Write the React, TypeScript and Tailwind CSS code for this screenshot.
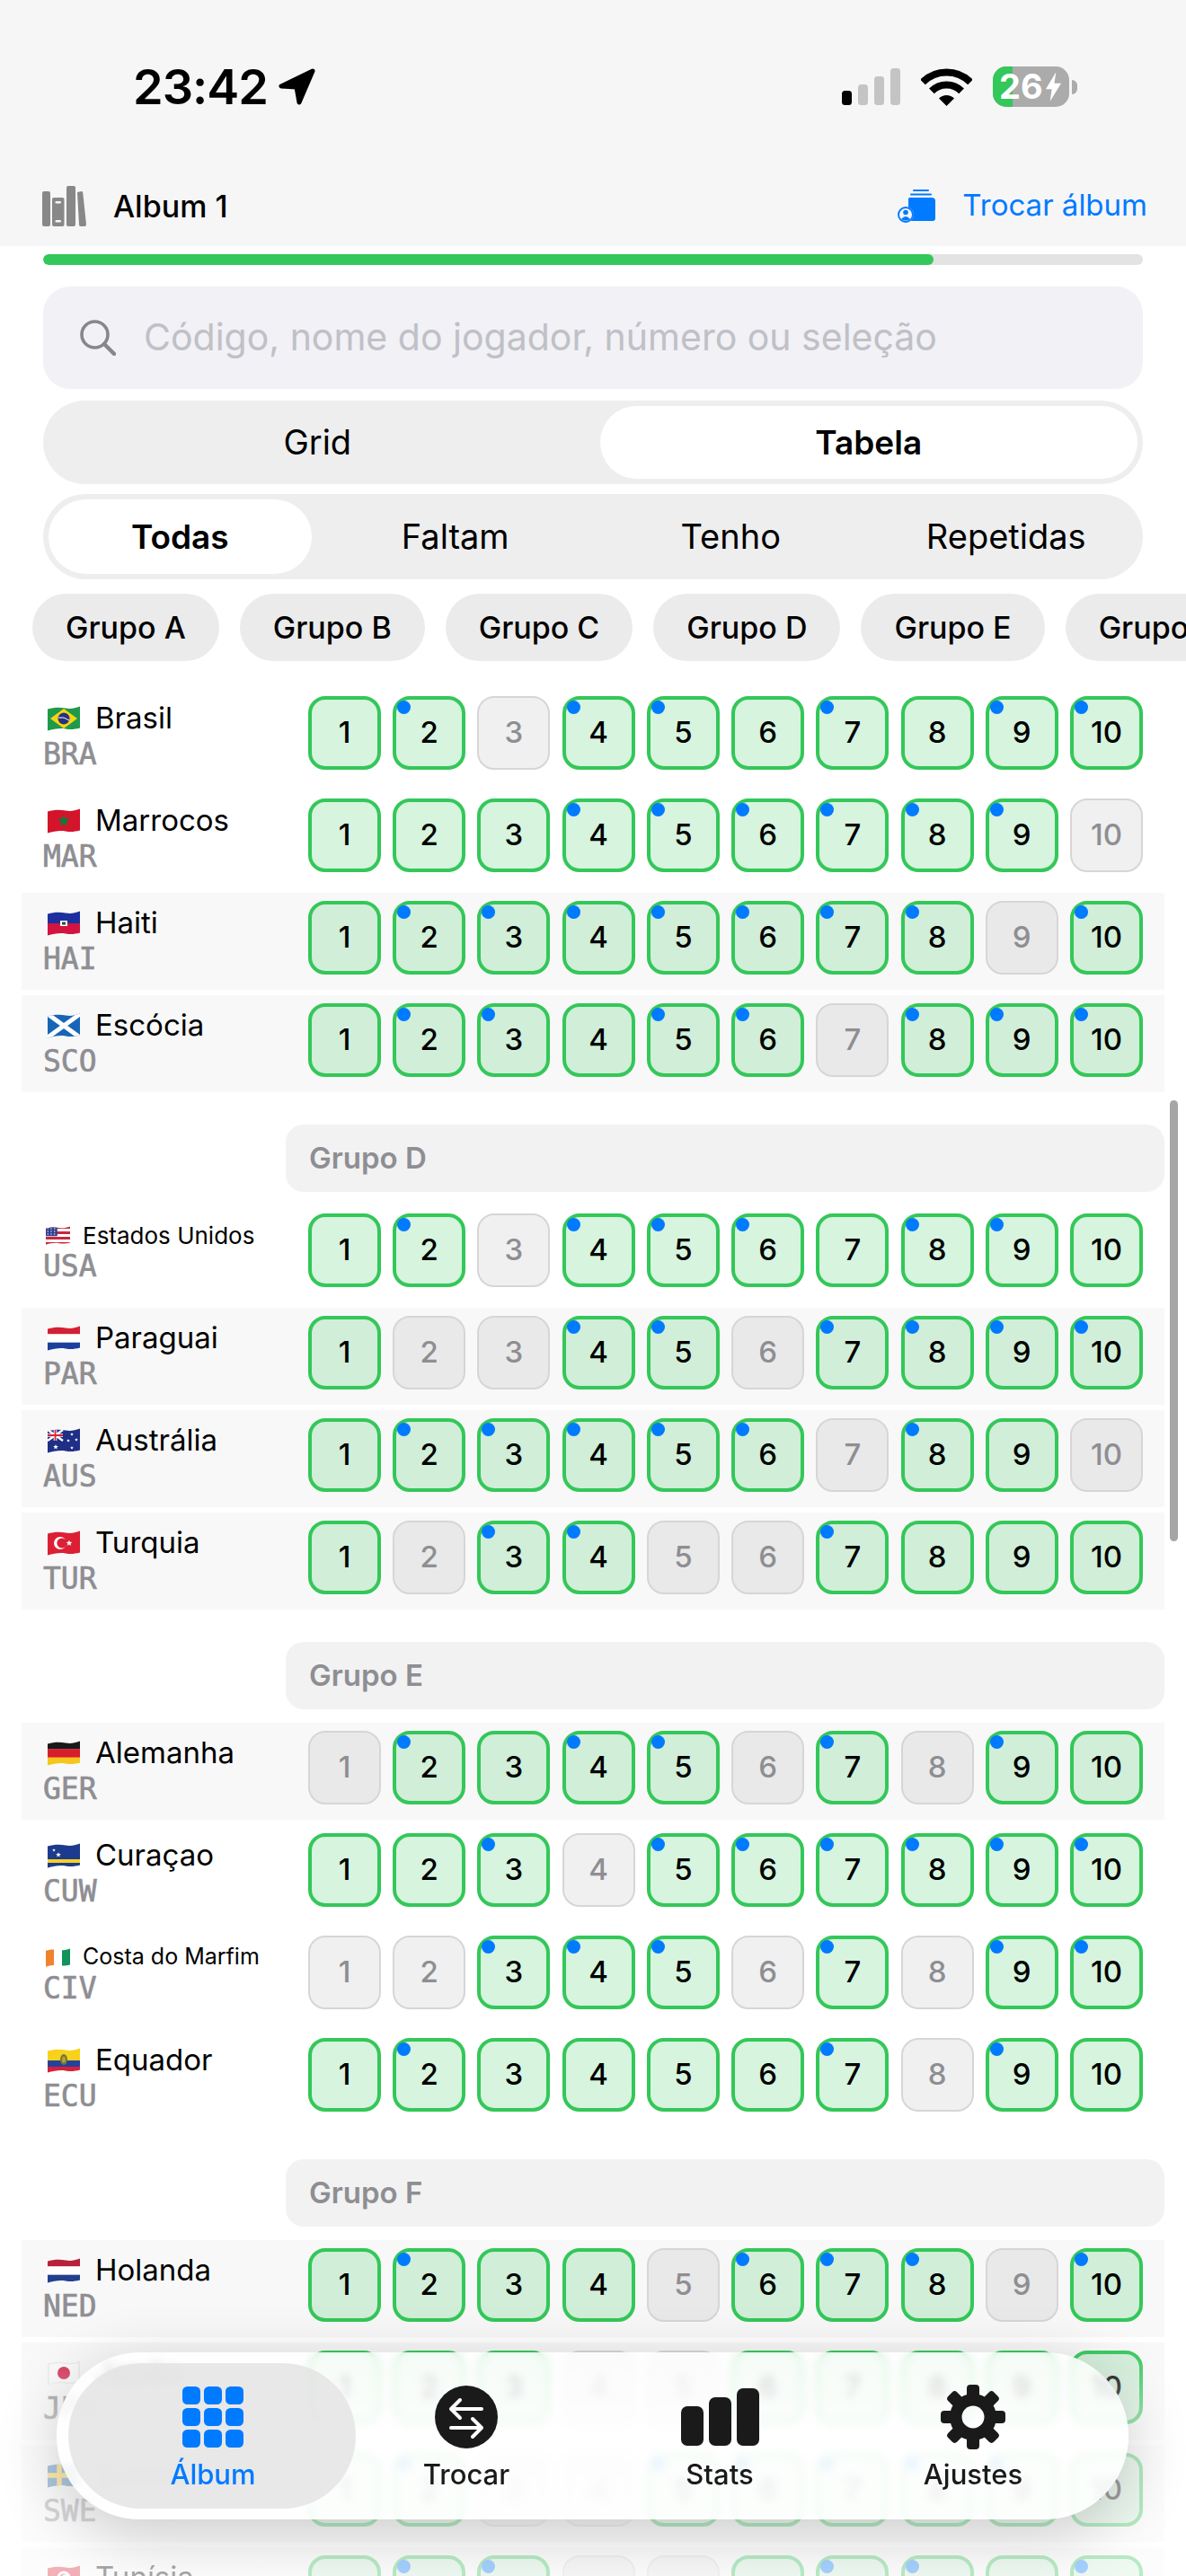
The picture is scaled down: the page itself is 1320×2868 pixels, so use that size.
import React, { useId } from 'react';

type Team = { name: string; code: string; flag: string; cells: string; shaded?: boolean; small?: string };

const groups: { title?: string; teams: Team[] }[] = [
  {
    teams: [
      { name: 'Brasil', code: 'BRA', flag: 'bra', cells: 'odmddododd' },
      { name: 'Marrocos', code: 'MAR', flag: 'mar', cells: 'oooddddddm' },
      { name: 'Haiti', code: 'HAI', flag: 'hai', cells: 'odddddddmd', shaded: true },
      { name: 'Escócia', code: 'SCO', flag: 'sco', cells: 'oddoddmddd', shaded: true },
    ],
  },
  {
    title: 'Grupo D',
    teams: [
      { name: 'Estados Unidos', code: 'USA', flag: 'usa', cells: 'odmdddoddo', small: 'text-[26px]' },
      { name: 'Paraguai', code: 'PAR', flag: 'par', cells: 'ommddmdddd', shaded: true },
      { name: 'Austrália', code: 'AUS', flag: 'aus', cells: 'odddddmdom', shaded: true },
      { name: 'Turquia', code: 'TUR', flag: 'tur', cells: 'omddmmdooo', shaded: true },
    ],
  },
  {
    title: 'Grupo E',
    teams: [
      { name: 'Alemanha', code: 'GER', flag: 'ger', cells: 'mdoddmdmdo', shaded: true },
      { name: 'Curaçao', code: 'CUW', flag: 'cuw', cells: 'oodmdddddd' },
      { name: 'Costa do Marfim', code: 'CIV', flag: 'civ', cells: 'mmdddmdmdd', small: 'text-[25px]' },
      { name: 'Equador', code: 'ECU', flag: 'ecu', cells: 'odoooodmdo' },
    ],
  },
  {
    title: 'Grupo F',
    teams: [
      { name: 'Holanda', code: 'NED', flag: 'ned', cells: 'odoomdddmd', shaded: true },
      { name: 'Japão', code: 'JPN', flag: 'jpn', cells: 'ooommooooo', shaded: true },
      { name: 'Suécia', code: 'SWE', flag: 'swe', cells: 'odmmdddddo', shaded: true },
      { name: 'Tunísia', code: 'TUN', flag: 'tun', cells: 'oddmmoddod', shaded: true },
    ],
  },
];

const Star = ({ x, y, r, fill }: { x: number; y: number; r: number; fill: string }) => {
  const pts = Array.from({ length: 10 }, (_, i) => {
    const a = (Math.PI / 5) * i - Math.PI / 2;
    const d = i % 2 ? r * 0.42 : r;
    return `${x + d * Math.cos(a)},${y + d * Math.sin(a)}`;
  }).join(' ');
  return <polygon points={pts} fill={fill} />;
};

const bands = (colors: string[]) =>
  colors.map((c, i) => <rect key={i} x="0" y={(i * 28) / colors.length} width="36" height={28 / colors.length + 0.2} fill={c} />);

const flagArt: Record<string, React.ReactNode> = {
  bra: (
    <>
      <rect width="36" height="28" fill="#1f9a49" />
      <polygon points="18,3 33,14 18,25 3,14" fill="#f7d417" />
      <circle cx="18" cy="14" r="6.5" fill="#26327f" />
      <path d="M12 13 Q18 11.5 24 16" stroke="#fff" strokeWidth="1" fill="none" />
    </>
  ),
  mar: (
    <>
      <rect width="36" height="28" fill="#d3142a" />
      <Star x={18} y={14} r={7} fill="#0f7a3a" />
    </>
  ),
  hai: (
    <>
      {bands(['#1c2f9f', '#d2143f'])}
      <rect x="14" y="11" width="8" height="6" fill="#fff" />
      <rect x="16" y="12.5" width="4" height="3" fill="#27503a" />
    </>
  ),
  sco: (
    <>
      <rect width="36" height="28" fill="#1666b5" />
      <path d="M0 1 L36 27 M36 1 L0 27" stroke="#fff" strokeWidth="5" />
    </>
  ),
  usa: (
    <>
      {bands(['#c8283c', '#fff', '#c8283c', '#fff', '#c8283c', '#fff', '#c8283c'])}
      <rect width="17" height="15" fill="#2f3f8f" />
      {[3, 8, 13].map((x) => [4, 8, 12].map((y) => <circle key={`${x}${y}`} cx={x} cy={y} r="0.9" fill="#fff" />))}
    </>
  ),
  par: <>{bands(['#d42035', '#fff', '#1d3f9c'])}</>,
  aus: (
    <>
      <rect width="36" height="28" fill="#1f2f86" />
      <path d="M0 2 L17 14 M17 2 L0 14" stroke="#fff" strokeWidth="2.4" />
      <path d="M8.5 2 V14 M0 8 H17" stroke="#fff" strokeWidth="3.6" />
      <path d="M8.5 2 V14 M0 8 H17" stroke="#d8213a" strokeWidth="1.8" />
      <Star x={9} y={21} r={3} fill="#fff" />
      <Star x={27} y={7} r={2} fill="#fff" />
      <Star x={32} y={13} r={2} fill="#fff" />
      <Star x={23} y={14} r={2} fill="#fff" />
      <Star x={27} y={22} r={2} fill="#fff" />
    </>
  ),
  tur: (
    <>
      <rect width="36" height="28" fill="#dc1f35" />
      <circle cx="14" cy="14" r="7" fill="#fff" />
      <circle cx="16" cy="14" r="5.6" fill="#dc1f35" />
      <Star x={24} y={14} r={3.6} fill="#fff" />
    </>
  ),
  ger: <>{bands(['#1a1a1a', '#d81e2a', '#f6c61c'])}</>,
  cuw: (
    <>
      <rect width="36" height="28" fill="#1c3a8e" />
      <rect y="18" width="36" height="4" fill="#f5d21f" />
      <Star x={7} y={8} r={2} fill="#fff" />
      <Star x={12} y={13} r={3} fill="#fff" />
    </>
  ),
  civ: (
    <>
      <rect width="12" height="28" fill="#f0832a" />
      <rect x="12" width="12" height="28" fill="#fff" />
      <rect x="24" width="12" height="28" fill="#12935a" />
    </>
  ),
  ecu: (
    <>
      <rect width="36" height="14" fill="#f8d21a" />
      <rect y="14" width="36" height="7" fill="#24429c" />
      <rect y="21" width="36" height="7" fill="#d8203a" />
      <ellipse cx="18" cy="13" rx="4" ry="6" fill="#6c7a3c" />
      <ellipse cx="18" cy="13" rx="2" ry="3.5" fill="#c89a2a" />
    </>
  ),
  ned: <>{bands(['#b8233a', '#fff', '#23408f'])}</>,
  jpn: (
    <>
      <rect width="36" height="28" fill="#ececec" />
      <path d="M2 5 C9 3 14 3 20 4 S30 4 34 2.5 V23 C30 24.5 26 25 20 24 S9 24 2 26 Z" fill="#fafafa" />
      <circle cx="18" cy="14" r="7" fill="#d3264f" />
    </>
  ),
  swe: (
    <>
      <rect width="36" height="28" fill="#2c6cb0" />
      <path d="M13 0 V28 M0 14 H36" stroke="#f7cf2a" strokeWidth="5.5" />
    </>
  ),
  tun: (
    <>
      <rect width="36" height="28" fill="#dc1f35" />
      <circle cx="18" cy="14" r="7.5" fill="#fff" />
      <circle cx="18" cy="14" r="4.6" fill="#dc1f35" />
      <circle cx="19.6" cy="14" r="3.8" fill="#fff" />
    </>
  ),
};

const Flag = ({ id, small }: { id: string; small?: boolean }) => {
  const clip = useId();
  return (
    <svg viewBox="0 0 36 28" className={small ? 'w-[27px] h-[21px] shrink-0' : 'w-[36px] h-[28px] shrink-0'}>
      <clipPath id={clip}>
        <path d="M0 3.5 C7 1.5 14 1.5 20 2.5 S30 2.5 36 0.5 V24.5 C30 26 26 26.5 20 25.5 S7 25.5 0 27.5 Z" />
      </clipPath>
      <g clipPath={`url(#${clip})`}>{flagArt[id]}</g>
    </svg>
  );
};

const Cell = ({ n, state }: { n: number; state: string }) => {
  if (state === 'm') {
    return (
      <div className="h-[82px] rounded-[19px] border-2 border-[#d6d6d6] bg-black/[0.06] flex items-center justify-center text-[33px] font-medium text-[#8e8e93]">
        {n}
      </div>
    );
  }
  return (
    <div className="relative h-[82px] rounded-[19px] border-4 border-[#34c759] bg-[#34c759]/20 flex items-center justify-center text-[33px] font-medium text-black">
      {state === 'd' && <span className="absolute left-[1px] top-[1px] w-[15px] h-[15px] rounded-full bg-[#007aff]" />}
      {n}
    </div>
  );
};

const Row = ({ team }: { team: Team }) => (
  <div className={`flex h-[108px] pt-[9px] pl-[24px] pr-[24px] ${team.shaded ? 'bg-[#f8f8f8]' : ''}`}>
    <div className="w-[295px] shrink-0 pt-[5px]">
      <div className={`flex items-center ${team.small ? 'h-[38px] gap-[14px] pl-[3px]' : 'h-[40px] gap-[17px] pl-[5px]'}`}>
        <Flag id={team.flag} small={!!team.small} />
        <span className={`text-black whitespace-nowrap ${team.small ? team.small : 'text-[33px]'}`}>{team.name}</span>
      </div>
      <div className={`font-['DejaVu_Sans_Mono',monospace] [-webkit-text-stroke:0.7px_#8e8e93] text-[#8e8e93] text-[33px] ${team.small ? 'h-[32px] leading-[32px]' : 'h-[40px] leading-[40px]'}`}>
        {team.code}
      </div>
    </div>
    <div className="flex-1 grid grid-cols-10 gap-x-[13.2px] self-start">
      {team.cells.split('').map((s, i) => (
        <Cell key={i} n={i + 1} state={s} />
      ))}
    </div>
  </div>
);

const Segmented = ({ items, active, className }: { items: string[]; active: string; className: string }) => (
  <div className={`mx-[48px] rounded-full bg-[#eeeeee] p-[6px] flex ${className}`}>
    {items.map((t) => (
      <div
        key={t}
        className={`flex-1 rounded-full flex items-center justify-center ${t === active ? 'bg-white font-semibold text-black text-[37px]' : 'font-normal text-black text-[38px]'}`}
      >
        {t}
      </div>
    ))}
  </div>
);

const StatusBar = () => (
  <div className="h-[45px] pl-[148px] pr-[121px] flex items-center justify-between">
    <div className="flex items-center gap-[12px]">
      <span className="text-[54px] leading-[45px] font-semibold tracking-[-1px] text-black">23:42</span>
      <svg viewBox="0 0 41 41" className="w-[41px] h-[41px]">
        <path d="M38 3 L3 20 L20 21 L23 38 Z" fill="#000" stroke="#000" strokeWidth="5" strokeLinejoin="round" />
      </svg>
    </div>
    <div className="flex items-center gap-[23px]">
      <svg viewBox="0 0 65 41" className="w-[65px] h-[41px]">
        <rect x="0" y="25" width="11" height="16" rx="3.5" fill="#000" />
        <rect x="18" y="18" width="11" height="23" rx="3.5" fill="#c4c4c4" />
        <rect x="36" y="9" width="11" height="32" rx="3.5" fill="#c4c4c4" />
        <rect x="54" y="0" width="11" height="41" rx="3.5" fill="#c4c4c4" />
      </svg>
      <svg viewBox="0 0 57 42" className="w-[57px] h-[42px]">
        <path d="M2 15.5 A37.5 37.5 0 0 1 55 15.5" fill="none" stroke="#000" strokeWidth="8" />
        <path d="M11.9 25.4 A23.5 23.5 0 0 1 45.1 25.4" fill="none" stroke="#000" strokeWidth="8" />
        <path d="M28.5 42 L20 33.5 A12 12 0 0 1 37 33.5 Z" fill="#000" />
      </svg>
      <div className="flex items-center gap-[3px]">
        <div className="relative w-[85px] h-[45px] rounded-[15px] bg-[#ababab] overflow-hidden flex items-center pl-[7px]">
          <span className="absolute left-0 top-0 w-[22px] h-[45px] bg-[#34c759]" />
          <span className="relative text-[38px] font-bold text-white leading-[45px]">26</span>
          <svg viewBox="0 0 20 34" className="relative w-[19px] h-[33px] ml-[2px]">
            <path d="M13 0 L1 20 H8 L6 34 L19 13 H11 Z" fill="#fff" />
          </svg>
        </div>
        <span className="w-[6px] h-[16px] rounded-r-full bg-[#ababab]" />
      </div>
    </div>
  </div>
);

const NavBar = () => (
  <div className="mt-[86px] h-[48px] pl-[47px] pr-[43px] flex items-center justify-between">
    <div className="flex items-center gap-[30px]">
      <svg viewBox="0 0 49 45" className="w-[49px] h-[45px]">
        <rect x="0" y="6" width="9" height="39" rx="2" fill="#888" />
        <rect x="11" y="13" width="13.5" height="32" rx="2" fill="#888" />
        <rect x="14.5" y="17" width="6.5" height="2.5" rx="1" fill="#f6f6f7" />
        <rect x="14.5" y="38" width="6.5" height="2.5" rx="1" fill="#f6f6f7" />
        <rect x="27" y="0" width="10" height="45" rx="2" fill="#888" />
        <path d="M39 7 L44 6 Q45 6 45.3 8 L49 43 Q49 45 47 45 L42.5 45 Q41 45 41 43 Z" fill="#888" />
      </svg>
      <span className="text-[34px] font-medium text-black">Album 1</span>
    </div>
    <div className="flex items-center gap-[30px]">
      <svg viewBox="0 0 42 37" className="w-[42px] h-[37px]">
        <rect x="17" y="0" width="18" height="2" rx="1" fill="#007aff" />
        <rect x="14" y="4.5" width="24" height="2" rx="1" fill="#007aff" />
        <path d="M13 9 H38 Q42 9 42 13 V32 Q42 35 39 35 H12 V10 Z" fill="#007aff" />
        <circle cx="9" cy="28" r="9" fill="#f6f6f7" />
        <circle cx="9" cy="28" r="8" fill="none" stroke="#007aff" strokeWidth="2" />
        <circle cx="9" cy="25.5" r="2.8" fill="#007aff" />
        <path d="M4 33 Q9 27 14 33 Q9 36 4 33 Z" fill="#007aff" />
      </svg>
      <span className="text-[33px] text-[#007aff]">Trocar álbum</span>
    </div>
  </div>
);

const GearIcon = () => {
  const mask = useId();
  return (
    <svg viewBox="0 0 72 72" className="w-[72px] h-[72px]">
      <mask id={mask}>
        <rect width="72" height="72" fill="#fff" />
        <circle cx="36" cy="36" r="12.5" fill="#000" />
      </mask>
      <g mask={`url(#${mask})`} fill="#1a1a1a">
        <circle cx="36" cy="36" r="26" />
        {[0, 45, 90, 135, 180, 225, 270, 315].map((a) => (
          <rect key={a} x="29" y="0" width="14" height="20" rx="4" transform={`rotate(${a} 36 36)`} />
        ))}
      </g>
    </svg>
  );
};

const tabs = [
  {
    label: 'Álbum',
    active: true,
    icon: (
      <svg viewBox="0 0 68 68" className="w-[68px] h-[68px]">
        {[0, 24, 48].map((x) => [0, 24, 48].map((y) => <rect key={`${x}-${y}`} x={x} y={y} width="20" height="20" rx="5.5" fill="#007aff" />))}
      </svg>
    ),
  },
  {
    label: 'Trocar',
    icon: (
      <svg viewBox="0 0 70 70" className="w-[70px] h-[70px]">
        <circle cx="35" cy="35" r="35" fill="#1a1a1a" />
        <path d="M52 26 H19 M28 16 L18 26 L28 36" fill="none" stroke="#fff" strokeWidth="4" strokeLinecap="round" strokeLinejoin="round" />
        <path d="M18 47 H51 M42 37 L52 47 L42 57" fill="none" stroke="#fff" strokeWidth="4" strokeLinecap="round" strokeLinejoin="round" />
      </svg>
    ),
  },
  {
    label: 'Stats',
    icon: (
      <svg viewBox="0 0 87 64" className="w-[87px] h-[64px]">
        <rect x="0" y="20" width="25" height="44" rx="7" fill="#1a1a1a" />
        <rect x="31" y="10" width="25" height="54" rx="7" fill="#1a1a1a" />
        <rect x="62" y="0" width="25" height="64" rx="7" fill="#1a1a1a" />
      </svg>
    ),
  },
  { label: 'Ajustes', icon: <GearIcon /> },
];

const TabBar = () => (
  <div className="absolute left-[63px] top-[2619px] w-[1193px] h-[186px] rounded-full bg-white/80 backdrop-blur-[5px] shadow-[0_16px_70px_rgba(0,0,0,0.2)] pl-[33px]">
    <div className="absolute left-[13px] top-[12px] w-[320px] h-[162px] rounded-full bg-[#e2e2e2]/80" />
    <div className="relative grid grid-cols-4 w-[1128px]">
      {tabs.map((t) => (
        <div key={t.label} className="flex flex-col items-center pt-[36px]">
          <div className="h-[72px] flex items-center justify-center">{t.icon}</div>
          <span className={`mt-[10px] leading-[36px] text-[31px] font-medium ${t.active ? 'text-[#007aff]' : 'text-[#1a1a1a]'}`}>{t.label}</span>
        </div>
      ))}
    </div>
  </div>
);

export default function App() {
  return (
    <div className="relative w-[1320px] h-[2868px] overflow-hidden bg-white font-['Inter',sans-serif]">
      <header className="h-[274px] pt-[74px] bg-[#f6f6f7]">
        <StatusBar />
        <NavBar />
      </header>

      <div className="mx-[48px] mt-[9px] h-[12px] rounded-full bg-[#e3e3e3] overflow-hidden">
        <div className="h-full w-[81%] rounded-full bg-[#34c759]" />
      </div>

      <div className="mx-[48px] mt-[24px] h-[114px] rounded-[30px] bg-[#f1f1f6] flex items-center pl-[41px] gap-[31px]">
        <svg viewBox="0 0 40 40" className="w-[40px] h-[40px] shrink-0">
          <circle cx="16.5" cy="16.5" r="14.5" fill="none" stroke="#86868b" strokeWidth="3.6" />
          <path d="M27 27 L38 38" stroke="#86868b" strokeWidth="4.4" strokeLinecap="round" />
        </svg>
        <span className="text-[41px] text-[#c0c0c6] whitespace-nowrap">Código, nome do jogador, número ou seleção</span>
      </div>

      <Segmented className="mt-[13px] h-[93px] gap-[15px]" items={['Grid', 'Tabela']} active="Tabela" />
      <Segmented className="mt-[11px] h-[95px] gap-[14px]" items={['Todas', 'Faltam', 'Tenho', 'Repetidas']} active="Todas" />

      <div className="mt-[16px] pl-[36px] h-[75px] flex gap-[23px] overflow-hidden">
        {['Grupo A', 'Grupo B', 'Grupo C', 'Grupo D', 'Grupo E', 'Grupo F'].map((g) => (
          <div key={g} className="shrink-0 h-[75px] px-[37px] rounded-full bg-[#ebebeb] flex items-center text-[34px] font-medium text-black">
            {g}
          </div>
        ))}
      </div>

      <div className="mt-[30px] ml-[24px] w-[1272px] flex flex-col gap-[36px]">
        {groups.map((g, i) => (
          <section key={i}>
            {g.title && (
              <div className="ml-[294px] mb-[15px] h-[75px] rounded-[20px] bg-[#f2f2f2] flex items-center pl-[26px] text-[33px] font-semibold text-[#8e8e93]">
                {g.title}
              </div>
            )}
            <div className="flex flex-col gap-[6px]">
              {g.teams.map((t) => (
                <Row key={t.code} team={t} />
              ))}
            </div>
          </section>
        ))}
      </div>

      <div className="absolute left-[1302px] top-[1225px] w-[9px] h-[491px] rounded-full bg-[#a6a6a6]" />
      <div className="absolute left-0 top-[2610px] w-[1320px] h-[258px] bg-gradient-to-b from-white/0 via-white/60 via-40% to-white/65" />
      <TabBar />
    </div>
  );
}
